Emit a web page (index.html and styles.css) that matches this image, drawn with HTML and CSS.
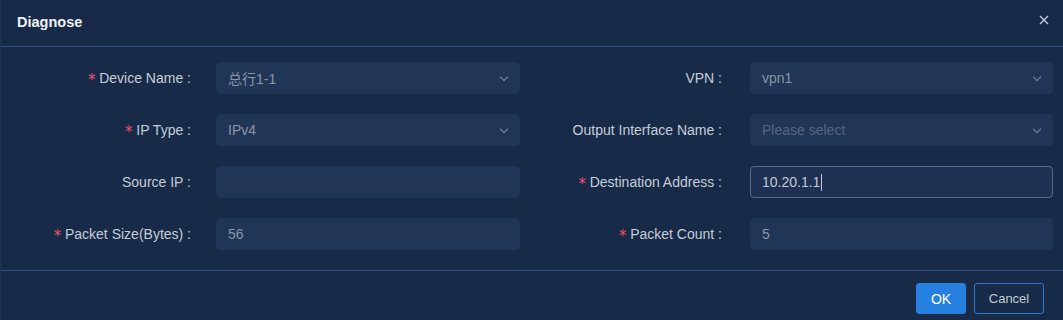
FILE: index.html
```html
<!DOCTYPE html>
<html lang="en">
<head>
    <meta charset="UTF-8">
    <meta name="viewport" content="width=device-width, initial-scale=1.0">
    <title>Diagnose</title>
    <link rel="stylesheet" href="styles.css">
</head>
<body>
    <div class="modal">
        <div class="modal-header">
            <div class="modal-title">Diagnose</div>
            <span class="close">
                <svg width="10" height="10" viewBox="0 0 10 10"><path d="M1 1L9 9M9 1L1 9" stroke="#c3cad6" stroke-width="1.4" fill="none"/></svg>
            </span>
        </div>

        <div class="form">
            <div class="item">
                <label class="label"><span class="req">*</span>Device Name :</label>
                <div class="control select"><span class="value">总行1-1</span><i class="arrow"></i></div>
            </div>
            <div class="item">
                <label class="label">VPN :</label>
                <div class="control select"><span class="value">vpn1</span><i class="arrow"></i></div>
            </div>

            <div class="item">
                <label class="label"><span class="req">*</span>IP Type :</label>
                <div class="control select"><span class="value">IPv4</span><i class="arrow"></i></div>
            </div>
            <div class="item">
                <label class="label">Output Interface Name :</label>
                <div class="control select"><span class="placeholder">Please select</span><i class="arrow"></i></div>
            </div>

            <div class="item">
                <label class="label">Source IP :</label>
                <div class="control"></div>
            </div>
            <div class="item">
                <label class="label"><span class="req">*</span>Destination Address :</label>
                <div class="control focused"><span class="value">10.20.1.1</span><span class="caret"></span></div>
            </div>

            <div class="item">
                <label class="label"><span class="req">*</span>Packet Size(Bytes) :</label>
                <div class="control"><span class="value">56</span></div>
            </div>
            <div class="item">
                <label class="label"><span class="req">*</span>Packet Count :</label>
                <div class="control"><span class="value">5</span></div>
            </div>
        </div>

        <div class="modal-footer">
            <button class="btn primary">OK</button>
            <button class="btn ghost">Cancel</button>
        </div>
    </div>
</body>
</html>
```

FILE: styles.css
```css
body {
    margin: 0;
    background: #23344f;
    font-family: 'Liberation Sans', Arial, 'Noto Sans CJK SC', sans-serif;
    overflow: hidden;
}

.modal {
    margin-left: 1px;
    height: 320px;
    background: #172a47;
    color: #c3cad6;
}

.modal-header {
    height: 47px;
    display: flex;
    align-items: center;
    justify-content: space-between;
    padding: 0 14px 2px 16px;
    box-sizing: border-box;
    border-bottom: 1px solid #2c5388;
}

.modal-title {
    font-size: 14.5px;
    font-weight: bold;
    color: #eef1f6;
}

.close {
    display: flex;
    margin-top: -4px;
}

.form {
    display: grid;
    grid-template-columns: 519px 1fr;
    column-gap: 11px;
    row-gap: 20px;
    padding: 15px 10px 20px 0;
    border-bottom: 1px solid #2c5388;
}

.item {
    display: flex;
    align-items: center;
}

.label {
    flex: 0 0 215px;
    box-sizing: border-box;
    padding-right: 25px;
    text-align: right;
    font-size: 14px;
    color: #c6cdd9;
}

.item:nth-child(even) .label {
    flex-basis: 219px;
    padding-right: 28px;
}

.req {
    color: #f0506e;
    font-family: 'DejaVu Sans Mono', monospace;
    font-size: 15px;
    margin-right: 3px;
    position: relative;
    top: 2px;
}

.control {
    flex: 1;
    height: 32px;
    box-sizing: border-box;
    background: #213556;
    border: 1px solid #213556;
    border-radius: 4px;
    padding: 0 11px;
    display: flex;
    align-items: center;
    position: relative;
    font-size: 14px;
}

.value {
    color: #8a96ab;
}

.placeholder {
    color: #56657f;
}

.focused {
    background: #1e3152;
    border-color: #56698a;
}

.focused .value {
    color: #c3cad6;
}

.caret {
    width: 1px;
    height: 17px;
    background: #c3cad6;
    margin-left: 1px;
}

.arrow {
    position: absolute;
    right: 12px;
    top: 11px;
    width: 5px;
    height: 5px;
    border-right: 1px solid #7d8aa0;
    border-bottom: 1px solid #7d8aa0;
    transform: rotate(45deg);
}

.modal-footer {
    display: flex;
    justify-content: flex-end;
    gap: 8px;
    padding: 12px 19px 0 0;
}

.btn {
    height: 31px;
    border-radius: 3px;
    font-family: inherit;
    font-size: 13px;
    cursor: pointer;
}

.primary {
    width: 50px;
    background: #2680e0;
    border: 1px solid #2680e0;
    color: #ffffff;
    font-size: 14px;
}

.ghost {
    width: 70px;
    background: transparent;
    border: 1px solid #2a78d2;
    color: #c3cad6;
}
```
